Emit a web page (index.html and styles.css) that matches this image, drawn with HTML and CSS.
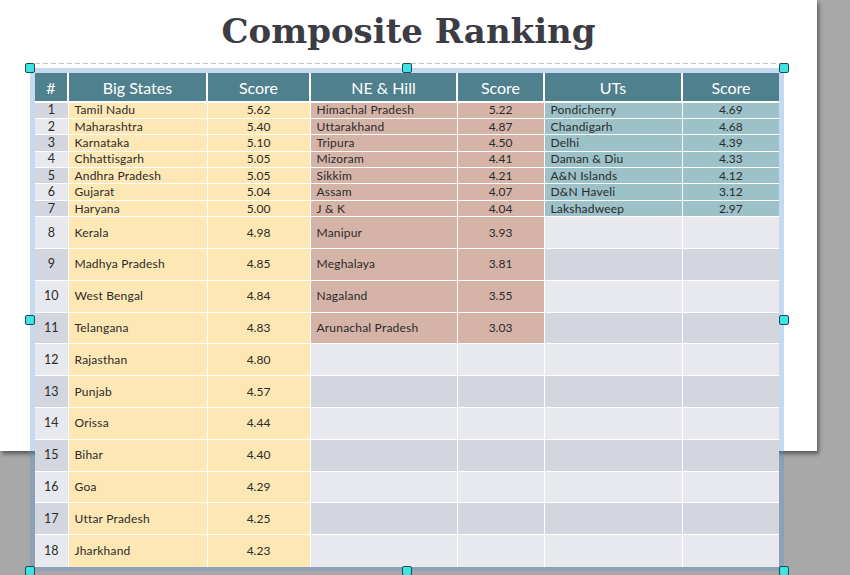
FILE: index.html
```html
<!DOCTYPE html>
<html lang="en">
<head>
<meta charset="utf-8">
<title>Composite Ranking</title>
<link rel="stylesheet" href="styles.css">
</head>
<body>
<div class="canvas">
  <div class="slide">
    <h1 class="title">Composite Ranking</h1>
  </div>
  <div class="selection">
    <div class="dash"></div>
    <table class="rank">
      <colgroup>
        <col class="c-num"><col class="c-big"><col class="c-bsc"><col class="c-ne"><col class="c-nsc"><col class="c-ut"><col class="c-usc">
      </colgroup>
      <thead>
        <tr><th>#</th><th>Big States</th><th>Score</th><th>NE &amp; Hill</th><th>Score</th><th>UTs</th><th>Score</th></tr>
      </thead>
      <tbody>
        <tr class="short"><td class="num">1</td><td class="big name">Tamil Nadu</td><td class="big sc">5.62</td><td class="ne name">Himachal Pradesh</td><td class="ne sc">5.22</td><td class="ut name">Pondicherry</td><td class="ut sc">4.69</td></tr>
        <tr class="short"><td class="num">2</td><td class="big name">Maharashtra</td><td class="big sc">5.40</td><td class="ne name">Uttarakhand</td><td class="ne sc">4.87</td><td class="ut name">Chandigarh</td><td class="ut sc">4.68</td></tr>
        <tr class="short"><td class="num">3</td><td class="big name">Karnataka</td><td class="big sc">5.10</td><td class="ne name">Tripura</td><td class="ne sc">4.50</td><td class="ut name">Delhi</td><td class="ut sc">4.39</td></tr>
        <tr class="short"><td class="num">4</td><td class="big name">Chhattisgarh</td><td class="big sc">5.05</td><td class="ne name">Mizoram</td><td class="ne sc">4.41</td><td class="ut name">Daman &amp; Diu</td><td class="ut sc">4.33</td></tr>
        <tr class="short"><td class="num">5</td><td class="big name">Andhra Pradesh</td><td class="big sc">5.05</td><td class="ne name">Sikkim</td><td class="ne sc">4.21</td><td class="ut name">A&amp;N Islands</td><td class="ut sc">4.12</td></tr>
        <tr class="short"><td class="num">6</td><td class="big name">Gujarat</td><td class="big sc">5.04</td><td class="ne name">Assam</td><td class="ne sc">4.07</td><td class="ut name">D&amp;N Haveli</td><td class="ut sc">3.12</td></tr>
        <tr class="short"><td class="num">7</td><td class="big name">Haryana</td><td class="big sc">5.00</td><td class="ne name">J &amp; K</td><td class="ne sc">4.04</td><td class="ut name">Lakshadweep</td><td class="ut sc">2.97</td></tr>
        <tr class="tall"><td class="num">8</td><td class="big name">Kerala</td><td class="big sc">4.98</td><td class="ne name">Manipur</td><td class="ne sc">3.93</td><td class="empty"></td><td class="empty"></td></tr>
        <tr class="tall"><td class="num">9</td><td class="big name">Madhya Pradesh</td><td class="big sc">4.85</td><td class="ne name">Meghalaya</td><td class="ne sc">3.81</td><td class="empty"></td><td class="empty"></td></tr>
        <tr class="tall"><td class="num">10</td><td class="big name">West Bengal</td><td class="big sc">4.84</td><td class="ne name">Nagaland</td><td class="ne sc">3.55</td><td class="empty"></td><td class="empty"></td></tr>
        <tr class="tall"><td class="num">11</td><td class="big name">Telangana</td><td class="big sc">4.83</td><td class="ne name">Arunachal Pradesh</td><td class="ne sc">3.03</td><td class="empty"></td><td class="empty"></td></tr>
        <tr class="tall"><td class="num">12</td><td class="big name">Rajasthan</td><td class="big sc">4.80</td><td class="empty"></td><td class="empty"></td><td class="empty"></td><td class="empty"></td></tr>
        <tr class="tall"><td class="num">13</td><td class="big name">Punjab</td><td class="big sc">4.57</td><td class="empty"></td><td class="empty"></td><td class="empty"></td><td class="empty"></td></tr>
        <tr class="tall"><td class="num">14</td><td class="big name">Orissa</td><td class="big sc">4.44</td><td class="empty"></td><td class="empty"></td><td class="empty"></td><td class="empty"></td></tr>
        <tr class="tall"><td class="num">15</td><td class="big name">Bihar</td><td class="big sc">4.40</td><td class="empty"></td><td class="empty"></td><td class="empty"></td><td class="empty"></td></tr>
        <tr class="tall"><td class="num">16</td><td class="big name">Goa</td><td class="big sc">4.29</td><td class="empty"></td><td class="empty"></td><td class="empty"></td><td class="empty"></td></tr>
        <tr class="tall"><td class="num">17</td><td class="big name">Uttar Pradesh</td><td class="big sc">4.25</td><td class="empty"></td><td class="empty"></td><td class="empty"></td><td class="empty"></td></tr>
        <tr class="tall"><td class="num">18</td><td class="big name">Jharkhand</td><td class="big sc">4.23</td><td class="empty"></td><td class="empty"></td><td class="empty"></td><td class="empty"></td></tr>
      </tbody>
    </table>
    <span class="handle h-tl"></span>
    <span class="handle h-tm"></span>
    <span class="handle h-tr"></span>
    <span class="handle h-ml"></span>
    <span class="handle h-mr"></span>
    <span class="handle h-bl"></span>
    <span class="handle h-bm"></span>
    <span class="handle h-br"></span>
  </div>
</div>
</body>
</html>
```

FILE: styles.css
```css
* { box-sizing: border-box; }

body {
  margin: 0;
  background: #a8a8a8;
}

.canvas {
  position: relative;
  width: 850px;
  height: 575px;
  overflow: hidden;
}

.slide {
  width: 817px;
  height: 451px;
  background: #ffffff;
  box-shadow: 2px 3px 4px rgba(0, 0, 0, 0.45);
  padding-top: 9px;
}

.title {
  margin: 0;
  text-align: center;
  font-family: "DejaVu Serif", serif;
  font-weight: bold;
  font-size: 34px;
  line-height: 44px;
  color: #3c3c45;
}

.selection {
  position: absolute;
  left: 30px;
  top: 68px;
  width: 754px;
  height: 503px;
  padding: 5px;
  background: rgba(90, 150, 215, 0.35);
}

.dash {
  position: absolute;
  left: 5px;
  right: -4px;
  top: -5px;
  height: 1px;
  background: repeating-linear-gradient(90deg, #c2c2c2 0 5px, transparent 5px 8px);
}

.rank {
  width: 744px;
  border-collapse: collapse;
  table-layout: fixed;
  font-family: "Lato", "Open Sans", sans-serif;
  font-size: 12px;
  color: #2b2b2b;
}

.c-num { width: 33px; }
.c-big { width: 139px; }
.c-bsc { width: 103px; }
.c-ne  { width: 147px; }
.c-nsc { width: 87px; }
.c-ut  { width: 138px; }
.c-usc { width: 97px; }

.rank th {
  height: 29px;
  padding: 0;
  background: #4f808e;
  color: #ffffff;
  font-weight: normal;
  font-size: 16px;
  border-left: 2px solid #ffffff;
  border-bottom: 2px solid #ffffff;
  text-align: center;
}

.rank th:first-child { border-left: 0; }

.rank td {
  padding: 0;
  border-left: 1.5px solid #ffffff;
  border-top: 1px solid #ffffff;
  text-align: center;
  line-height: 14px;
}

.rank td:first-child { border-left: 0; }

.short td { height: 16.4px; }
.tall td { height: 31.8px; }

.rank td.name {
  text-align: left;
  padding-left: 6px;
  letter-spacing: 0.2px;
}

.rank td.num {
  font-size: 12.5px;
  background: #e8e9ee;
}

.rank td.empty { background: #e8e9ee; }

.rank tbody tr:nth-child(odd) td.num,
.rank tbody tr:nth-child(odd) td.empty {
  background: #d3d6df;
}

.rank td.big { background: #fde7b4; }
.rank td.ne  { background: #d5b4a7; }
.rank td.ut  { background: #9cc1c8; }

.handle {
  position: absolute;
  width: 10px;
  height: 10px;
  background: #3fe3e3;
  border: 1px solid #1d4b52;
  border-radius: 2px;
}

.h-tl { left: -5px; top: -5px; }
.h-tm { left: calc(50% - 5px); top: -5px; }
.h-tr { right: -5px; top: -5px; }
.h-ml { left: -5px; top: calc(50% - 5px); }
.h-mr { right: -5px; top: calc(50% - 5px); }
.h-bl { left: -5px; bottom: -5px; }
.h-bm { left: calc(50% - 5px); bottom: -5px; }
.h-br { right: -5px; bottom: -5px; }
```
